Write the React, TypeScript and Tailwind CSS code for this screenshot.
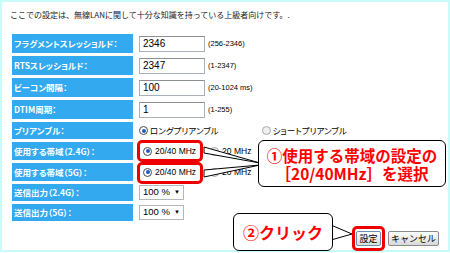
const jp = "font-['Noto_Sans_CJK_JP','Noto_Sans',sans-serif]";
const latin = "font-['Liberation_Sans',Arial,sans-serif]";

function Label({ text, h }: { text: string; h: string }) {
    return (
        <div className={`w-[121px] ${h} bg-[#33a9ef] flex items-center pl-[2px] text-white font-bold text-[8.5px] leading-none ${jp} [font-feature-settings:'palt']`}>
            {text}
        </div>
    )
}

function Radio({ on }: { on: boolean }) {
    return on ? (
        <span className="w-[9px] h-[9px] rounded-full border border-[#4a4a4a] bg-white flex items-center justify-center">
            <span className="w-[4px] h-[4px] rounded-full bg-[#1b5bc4]"/>
        </span>
    ) : (
        <span className="w-[9px] h-[9px] rounded-full border border-[#a8a8a8] bg-[#f0f0f0]"/>
    )
}

function NumRow({ label, value, range }: { label: string; value: string; range: string }) {
    return (
        <div className="flex items-center h-[19px]">
            <Label text={label} h="h-[19px]"/>
            <div className={`ml-[6px] w-[66px] h-[16px] bg-white border border-[#a9b0b8] border-t-[#8a8f96] flex items-center px-[3px] text-[10px] text-black ${latin}`}>
                {value}
            </div>
            <span className={`ml-[3px] text-[7.5px] text-black ${latin}`}>{range}</span>
        </div>
    )
}

function BandRow({ label }: { label: string }) {
    return (
        <div className="flex items-center h-[18px]">
            <Label text={label} h="h-[18px]"/>
            <div className={`ml-[10px] flex items-center gap-[3px] text-[8.5px] text-black ${latin}`}>
                <Radio on={true}/>
                <span>20/40 MHz</span>
                <span className="ml-[11px] flex items-center gap-[3px]">
                    <Radio on={false}/>
                    <span>20 MHz</span>
                </span>
            </div>
        </div>
    )
}

function PowerRow({ label }: { label: string }) {
    return (
        <div className="flex items-center h-[17px]">
            <Label text={label} h="h-[17px]"/>
            <div className={`ml-[6px] w-[45px] h-[15px] bg-white border border-[#b4b8bd] flex items-center justify-between pl-[3px] pr-[3px] text-[9.5px] text-black ${latin}`}>
                <span>100 %</span>
                <span className="text-[6px]">▼</span>
            </div>
        </div>
    )
}

export default function App() {
    return (
        <div className="relative w-[450px] h-[253px] bg-white overflow-hidden">
            <div className="w-[450px] h-[252px] border-2 border-[#c9fbfb] pl-[8px] pr-[8px] pt-[8px]">
                <p className={`text-[8px] leading-[10px] text-[#222] ${jp}`}>
                    ここでの設定は、無線LANに関して十分な知識を持っている上級者向けです。.
                </p>
                <div className="ml-[2px] mt-[14px] flex flex-col gap-[3px]">
                    <NumRow label="フラグメントスレッショルド：" value="2346" range="(256-2346)"/>
                    <NumRow label="RTSスレッショルド：" value="2347" range="(1-2347)"/>
                    <NumRow label="ビーコン間隔：" value="100" range="(20-1024 ms)"/>
                    <NumRow label="DTIM周期：" value="1" range="(1-255)"/>
                    <div className="flex items-center h-[17px]">
                        <Label text="プリアンブル：" h="h-[17px]"/>
                        <div className={`ml-[6px] flex items-center gap-[2px] text-[8.5px] text-black ${jp} [font-feature-settings:'palt']`}>
                            <Radio on={true}/>
                            <span>ロングプリアンブル</span>
                            <span className="ml-[41px] flex items-center gap-[2px]">
                                <Radio on={false}/>
                                <span>ショートプリアンブル</span>
                            </span>
                        </div>
                    </div>
                    <BandRow label="使用する帯域（2.4G）："/>
                    <BandRow label="使用する帯域（5G）："/>
                    <PowerRow label="送信出力（2.4G）："/>
                    <PowerRow label="送信出力（5G）："/>
                </div>
                <div className={`mt-[10px] flex justify-end gap-[7px] pr-[1px] text-[9px] text-black ${jp}`}>
                    <button className="w-[25px] h-[15px] border border-[#6f8fae] rounded-[2px] bg-gradient-to-b from-[#ffffff] to-[#dcdcdc] flex items-center justify-center">設定</button>
                    <button className="w-[51px] h-[15px] border border-[#8a8a8a] rounded-[2px] bg-gradient-to-b from-[#ffffff] to-[#d8d8d8] flex items-center justify-center">キャンセル</button>
                </div>
            </div>

            {/* red highlight boxes */}
            <div className="absolute left-[137px] top-[140px] w-[66px] h-[22px] border-[3px] border-[#ee0000] rounded-[5px]"/>
            <div className="absolute left-[137px] top-[162px] w-[66px] h-[22px] border-[3px] border-[#ee0000] rounded-[5px]"/>
            <div className="absolute left-[352px] top-[226px] w-[33px] h-[25px] border-[3px] border-[#ee0000] rounded-[5px]"/>

            {/* callout tails */}
            <svg className="absolute left-0 top-0 pointer-events-none" width="450" height="253">
                <polygon points="204,147 260,163 204,153" fill="#fff" stroke="#000" strokeWidth="1"/>
                <polygon points="204,170 260,165 204,177" fill="#fff" stroke="#000" strokeWidth="1"/>
                <polygon points="331,225 352,234 331,240" fill="#fff" stroke="#000" strokeWidth="1"/>
            </svg>

            {/* callouts */}
            <div className={`absolute left-[258px] top-[140px] w-[188px] h-[47px] bg-white border border-black rounded-[6px] flex flex-col items-center justify-center text-[15.5px] leading-[18px] font-bold text-[#ff0000] ${jp}`}>
                <span>①使用する帯域の設定の</span>
                <span>［20/40MHz］を選択</span>
            </div>
            <div className={`absolute left-[233px] top-[213px] w-[100px] h-[38px] bg-white border border-black rounded-[6px] flex items-center justify-center text-[16px] font-bold text-[#ff0000] ${jp}`}>
                ②クリック
            </div>
        </div>
    )
}
